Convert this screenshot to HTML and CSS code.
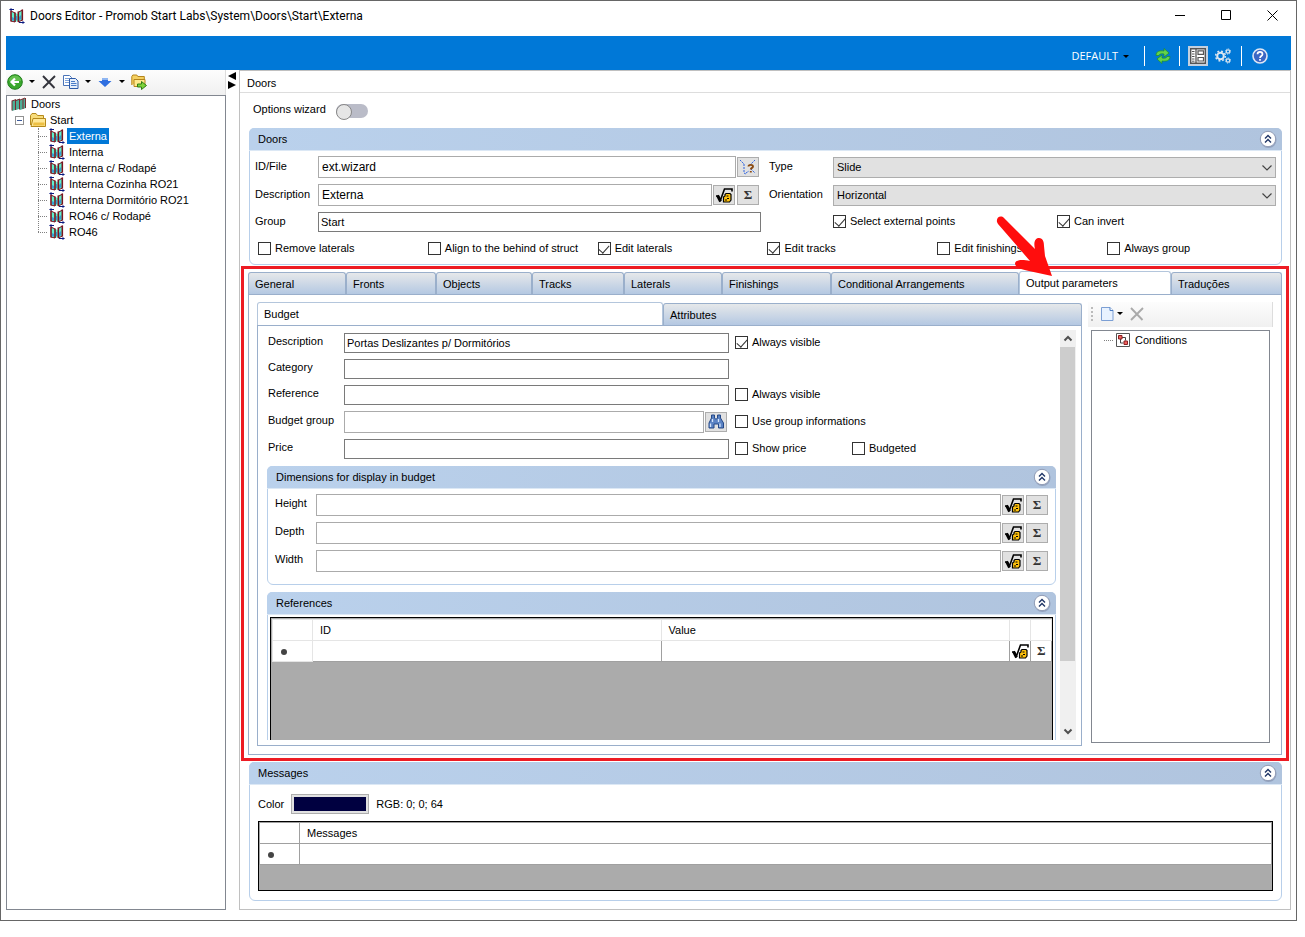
FILE: index.html
```
<!DOCTYPE html>
<html lang="en">
<head>
    <meta charset="UTF-8">
    <meta name="viewport" content="width=device-width, initial-scale=1.0">
    <title>Doors Editor</title>
    <link rel="stylesheet" href="styles.css">
</head>
<body>
    <!-- shared icons -->
    <svg class="sprite" aria-hidden="true">
        <symbol id="i-door" viewBox="0 0 16 16">
            <path d="M2 3l4 2v9l-4-1zM6 5l3 1v7l-3 1zM9 4l4-2v10l-4 2z" fill="#5ff0cc"/>
            <path d="M3 9l2 1v3l-2-1zM10 9l2-2v4l-2 2zM7 8h1v4H7z" fill="#35a0d8"/>
            <path d="M2 2.500v11M6 4.500v9.500M9.300 3.500v10.500M13.300 1.500v11" stroke="#7a1420" stroke-width="1.600" fill="none"/>
            <path d="M2 3l4 2M9 4.500l4.500-2.500M2 13l4 1M9 14l4.500-2" stroke="#7a1420" fill="none"/>
            <path d="M1 1.500h4M10 14.500h5" stroke="#0a1a80"/>
            <path d="M0 1.500l2.500-1.500v3zM16 14.500l-2.500-1.500v3z" fill="#0a1a80"/>
        </symbol>
        <symbol id="i-doors" viewBox="0 0 16 16">
            <path d="M1 5l3-1v10l-3 1zM5 4l3-1v10l-3 1zM9 4l3-1v10l-3 1zM12 3l3-1v10l-3 1z" fill="#4fae96"/>
            <path d="M1 4.500v10M4.500 4v10M8.500 3v10.500M12 3v10M14.500 2v10M1 5l4-1.500M5 4.500l4-1.500M9 4l5-2" stroke="#7a2a30" fill="none"/>
        </symbol>
        <symbol id="i-folder" viewBox="0 0 16 16">
            <path d="M.5 13V3.500l1.500-2h4l1.500 2h6v3" fill="#f7dc7a" stroke="#b58a1c"/>
            <path d="M1 14.500l2-8h12.500v8z" fill="#ffe998" stroke="#b58a1c"/>
            <path d="M3 13.500h11.500v-3h-11z" fill="#edc044"/>
        </symbol>
        <symbol id="i-back" viewBox="0 0 16 16">
            <circle cx="8" cy="8" r="7.300" fill="#3aa82c" stroke="#1d7d18"/>
            <path d="M2 7a6 5.500 0 0 1 12 0z" fill="#7fd066" opacity=".6"/>
            <path d="M12 8H5M8 4.500L4.500 8 8 11.500" stroke="#fff" stroke-width="2.200" fill="none"/>
        </symbol>
        <symbol id="i-x" viewBox="0 0 16 16">
            <path d="M2 2l11.500 12M14 2L2 14" stroke="currentColor" stroke-width="1.900" fill="none"/>
        </symbol>
        <symbol id="i-copy" viewBox="0 0 16 16">
            <path d="M.5 1.500h6l2 2v8h-8z" fill="#fff" stroke="#4a74b8"/>
            <path d="M2 4.500h4M2 6.500h5M2 8.500h5" stroke="#7fa3d8"/>
            <path d="M6.500 4.500h6l2.500 2.500v7.500H6.500z" fill="#e6effb" stroke="#2d5ba8"/>
            <path d="M8 7.500h4M8 9.500h5.500M8 11.500h5.500" stroke="#4a7cc8"/>
        </symbol>
        <symbol id="i-down" viewBox="0 0 16 16">
            <path d="M5 4h6v3h3.500L8 13 1.500 7H5z" fill="#2f6fe0"/>
            <path d="M5 4h6v2H5z" fill="#8fb6f2"/>
        </symbol>
        <symbol id="i-export" viewBox="0 0 16 16">
            <path d="M.8 11V2.500l1-1.500h4l1 1.500h6.500V5" fill="#f5d060" stroke="#b5851c"/>
            <path d="M3 12.500V5.500h11v7z" fill="#ffe98c" stroke="#b5851c"/>
            <path d="M6.500 10h4V7.500l5 4-5 4V13h-4z" fill="#7ed33a" stroke="#2f7d14"/>
        </symbol>
        <symbol id="i-refresh" viewBox="0 0 16 16">
            <path d="M1 7.500C1 3 5 2.500 9 3V.5l5 4.500-5 4V6C6 5.500 4.500 6 4 7.500z" fill="#63d34b" stroke="#1f8d25" stroke-width=".7"/>
            <path d="M15 8.500c0 4.500-4 5-8 4.500v2.500L2 11l5-4v3c3 .5 4.500 0 5-1.500z" fill="#63d34b" stroke="#1f8d25" stroke-width=".7"/>
        </symbol>
        <symbol id="i-layout" viewBox="0 0 16 16">
            <path d="M.7.700h14.600v14.600H.7z" fill="#fff" stroke="#555" stroke-width="1.400"/>
            <path d="M6 1v14" stroke="#555" stroke-width="1.300"/>
            <path d="M2 3.500h2.500M2 6h2.500M2 8.500h2.500M2 11h2.500M2 13.200h2.500" stroke="#555"/>
            <path d="M8 2.800h5.500v3.500H8zM8 9.500h5.500v3.500H8z" fill="none" stroke="#555" stroke-width="1.200"/>
        </symbol>
        <symbol id="i-gears" viewBox="0 0 16 16">
            <g fill="none" stroke="#dce6f0">
                <circle cx="5.500" cy="8" r="3.300" stroke-width="2"/>
                <circle cx="5.500" cy="8" r="4.900" stroke-width="1.500" stroke-dasharray="1.900 1.950"/>
                <circle cx="13" cy="3.500" r="1.700" stroke-width="1.200"/>
                <circle cx="13" cy="3.500" r="2.600" stroke-dasharray="1 1.040"/>
                <circle cx="13" cy="12.500" r="1.700" stroke-width="1.200"/>
                <circle cx="13" cy="12.500" r="2.600" stroke-dasharray="1 1.040"/>
            </g>
        </symbol>
        <symbol id="i-help" viewBox="0 0 16 16">
            <circle cx="8" cy="8" r="7" fill="#3c66c4" stroke="#dfe6f4" stroke-width="1.600"/>
            <path d="M5.500 6.200c0-3.200 5-3.200 5 0 0 1.800-2.500 1.800-2.500 3.800M8 11v1.800" stroke="#fff" stroke-width="1.700" fill="none"/>
        </symbol>
        <symbol id="i-formula" viewBox="0 0 18 16">
            <path d="M1 9h2.500l2 4L9.500 2H17v2.500" stroke="#000" stroke-width="1.600" fill="none"/>
            <path d="M2.500 8.500l3 6" stroke="#000" stroke-width="2.800"/>
            <path d="M8.500 10L10 9V7.500l1-1h4l1 1v5.500l-1.500 2h-6z" fill="#ffc20e" stroke="#000" stroke-width="1.200"/>
            <path d="M11.500 9h2M12 11.500h2M10 13h2" stroke="#000"/>
        </symbol>
        <symbol id="i-points" viewBox="0 0 16 16">
            <path d="M0 1l4 4M4 5v9l2 1M6 14l3-2M15 1l-5 5M11 10l4 4" stroke="#2e62e0" stroke-dasharray="2 1" fill="none"/>
            <path d="M8.500 7.500c0-2.200 4.500-2.200 4.500 0 0 1.500-2.200 1.200-2.200 3M10.800 12v1.600" stroke="#8a4a12" stroke-width="1.900" fill="none"/>
        </symbol>
        <symbol id="i-binoculars" viewBox="0 0 16 16">
            <path d="M3.500 1h3v3l1 1h1l1-1V1h3v3l3 5v5h-5v-4H6v4H1V9l2.500-5z" fill="#5b83c4" stroke="#244888"/>
            <path d="M2.500 9.500v3.500M4.500 5v3M12 9.500v3.500M10.500 5v3" stroke="#d5e4fa" stroke-width="1.300"/>
        </symbol>
        <symbol id="i-file" viewBox="0 0 16 16">
            <path d="M2.500 1.500h8.500l3 3v10h-11.500z" fill="#e8f2ff" stroke="#7c9fd4"/>
            <path d="M11 1.500v3h3" fill="#fff" stroke="#4d7ec4"/>
        </symbol>
        <symbol id="i-condition" viewBox="0 0 16 16">
            <path d="M1.500 1.500h13v13h-13z" fill="#fff" stroke="#555"/>
            <path d="M5.500 7v4h3M7 5.500h3.500v3" stroke="#444" fill="none"/>
            <path d="M3.500 3.500h3.500v3.500H3.500zM9 9h3.500v3.500H9z" fill="#f06060" stroke="#8a2020"/>
        </symbol>
        <symbol id="i-collapse" viewBox="0 0 18 18">
            <circle cx="9.500" cy="10" r="8" fill="#7f8cab" opacity=".6"/>
            <circle cx="9" cy="9" r="7.700" fill="#fff" stroke="#8f9bb5"/>
            <path d="M6 8.500l3-3 3 3M6 12.500l3-3 3 3" stroke="#1f3566" stroke-width="1.400" fill="none"/>
        </symbol>
        <symbol id="i-chevron" viewBox="0 0 12 8">
            <path d="M1.500 1.500L6 6l4.500-4.500" stroke="#444" stroke-width="1.200" fill="none"/>
        </symbol>
        <symbol id="i-scroll" viewBox="0 0 10 10">
            <path d="M1.500 3L5 6.500 8.500 3" stroke="#505050" stroke-width="2" fill="none"/>
        </symbol>
    </svg>

    <div class="window">
        <header class="titlebar">
            <svg class="icon"><use href="#i-door"/></svg>
            <h1>Doors Editor - Promob Start Labs\System\Doors\Start\Externa</h1>
            <div class="window-buttons">
                <button type="button" aria-label="Minimize"><svg width="11" height="11"><path d="M0 5.500h10" stroke="#000"/></svg></button>
                <button type="button" aria-label="Maximize"><svg width="11" height="11"><path d="M.5.500h9v9h-9z" stroke="#000" fill="none"/></svg></button>
                <button type="button" aria-label="Close"><svg width="11" height="11"><path d="M.5.500l10 10M10.500.500l-10 10" stroke="#000"/></svg></button>
            </div>
        </header>

        <nav class="ribbon">
            <button type="button" class="profile">DEFAULT <span class="caret"></span></button>
            <span class="divider"></span>
            <button type="button" class="refresh" aria-label="Refresh"><svg class="icon"><use href="#i-refresh"/></svg></button>
            <span class="divider"></span>
            <button type="button" class="active" aria-label="Layout"><svg class="icon"><use href="#i-layout"/></svg></button>
            <button type="button" aria-label="Settings"><svg class="icon"><use href="#i-gears"/></svg></button>
            <span class="divider"></span>
            <button type="button" aria-label="Help"><svg class="icon"><use href="#i-help"/></svg></button>
        </nav>

        <div class="workspace">
            <aside class="sidebar">
                <div class="toolbar">
                    <button type="button" aria-label="New"><svg class="icon"><use href="#i-back"/></svg><span class="caret"></span></button>
                    <button type="button" class="dark" aria-label="Delete"><svg class="icon"><use href="#i-x"/></svg></button>
                    <button type="button" aria-label="Copy"><svg class="icon"><use href="#i-copy"/></svg><span class="caret"></span></button>
                    <button type="button" aria-label="Move down"><svg class="icon"><use href="#i-down"/></svg><span class="caret"></span></button>
                    <button type="button" aria-label="Export"><svg class="icon"><use href="#i-export"/></svg></button>
                </div>
                <div class="tree">
                    <div class="node root"><svg class="icon"><use href="#i-doors"/></svg><span>Doors</span></div>
                    <div class="node branch"><span class="expander"></span><svg class="icon"><use href="#i-folder"/></svg><span>Start</span></div>
                    <ul>
                        <li class="node selected"><svg class="icon"><use href="#i-door"/></svg><span>Externa</span></li>
                        <li class="node"><svg class="icon"><use href="#i-door"/></svg><span>Interna</span></li>
                        <li class="node"><svg class="icon"><use href="#i-door"/></svg><span>Interna c/ Rodapé</span></li>
                        <li class="node"><svg class="icon"><use href="#i-door"/></svg><span>Interna Cozinha RO21</span></li>
                        <li class="node"><svg class="icon"><use href="#i-door"/></svg><span>Interna Dormitório RO21</span></li>
                        <li class="node"><svg class="icon"><use href="#i-door"/></svg><span>RO46 c/ Rodapé</span></li>
                        <li class="node"><svg class="icon"><use href="#i-door"/></svg><span>RO46</span></li>
                    </ul>
                </div>
            </aside>

            <div class="splitter">
                <svg width="10" height="18"><path d="M9 0v8L1 4zM1 9v8l8-4z"/></svg>
            </div>

            <main class="editor">
                <h2 class="editor-title">Doors</h2>
                <div class="editor-body">
                    <div class="wizard">
                        <label for="wizard">Options wizard</label>
                        <input type="checkbox" class="switch" id="wizard">
                    </div>

                    <section class="panel">
                        <div class="panel-head">
                            <h3>Doors</h3>
                            <button type="button" class="collapse" aria-label="Collapse"><svg><use href="#i-collapse"/></svg></button>
                        </div>
                        <div class="door-form">
                            <label for="file">ID/File</label>
                            <div class="field">
                                <input type="text" class="text tall" id="file" value="ext.wizard">
                                <button type="button" class="tool" aria-label="Pick"><svg class="icon"><use href="#i-points"/></svg></button>
                            </div>
                            <label for="type" class="second">Type</label>
                            <div class="select">
                                <select id="type"><option>Slide</option></select>
                                <svg><use href="#i-chevron"/></svg>
                            </div>
                            <label for="desc">Description</label>
                            <div class="field">
                                <input type="text" class="text tall" id="desc" value="Externa">
                                <button type="button" class="tool" aria-label="Formula"><svg class="formula"><use href="#i-formula"/></svg></button>
                                <button type="button" class="tool sigma">Σ</button>
                            </div>
                            <label for="orientation" class="second">Orientation</label>
                            <div class="select">
                                <select id="orientation"><option>Horizontal</option></select>
                                <svg><use href="#i-chevron"/></svg>
                            </div>
                            <label for="group">Group</label>
                            <input type="text" class="text" id="group" value="Start">
                            <div class="check-pair">
                                <label class="check"><input type="checkbox" checked>Select external points</label>
                                <label class="check"><input type="checkbox" checked>Can invert</label>
                            </div>
                        </div>
                        <div class="check-row">
                            <label class="check"><input type="checkbox">Remove laterals</label>
                            <label class="check"><input type="checkbox">Align to the behind of struct</label>
                            <label class="check"><input type="checkbox" checked>Edit laterals</label>
                            <label class="check"><input type="checkbox" checked>Edit tracks</label>
                            <label class="check"><input type="checkbox">Edit finishings</label>
                            <label class="check"><input type="checkbox">Always group</label>
                        </div>
                    </section>

                    <section class="tabs">
                        <div class="tab-strip main-strip">
                            <button type="button" class="tab">General</button>
                            <button type="button" class="tab">Fronts</button>
                            <button type="button" class="tab">Objects</button>
                            <button type="button" class="tab">Tracks</button>
                            <button type="button" class="tab">Laterals</button>
                            <button type="button" class="tab">Finishings</button>
                            <button type="button" class="tab">Conditional Arrangements</button>
                            <button type="button" class="tab current">Output parameters
                                <svg class="pointer" viewBox="0 0 60 66">
                                    <path d="M1 7C0 2 5 0 8 3L39 34C37 26 40 23 43 23 47 23 48 27 48 31L49 41 56 61 33 56C26 54 20 53 19 49 19 45 25 44 34 46L2 9z" fill="#ff0d0d"/>
                                </svg>
                            </button>
                            <button type="button" class="tab">Traduções</button>
                        </div>
                        <div class="tab-page">
                            <div class="inner-tabs">
                                <div class="tab-strip inner-strip">
                                    <button type="button" class="tab current">Budget</button>
                                    <button type="button" class="tab">Attributes</button>
                                </div>
                                <div class="inner-page">
                                    <div class="pane">
                                        <div class="budget-form">
                                            <label for="b-desc">Description</label>
                                            <input type="text" class="text" id="b-desc" value="Portas Deslizantes p/ Dormitórios">
                                            <label class="check"><input type="checkbox" checked>Always visible</label>
                                            <label for="b-cat">Category</label>
                                            <input type="text" class="text" id="b-cat">
                                            <span></span>
                                            <label for="b-ref">Reference</label>
                                            <input type="text" class="text" id="b-ref">
                                            <label class="check"><input type="checkbox">Always visible</label>
                                            <label for="b-group">Budget group</label>
                                            <div class="field">
                                                <input type="text" class="text tall" id="b-group">
                                                <button type="button" class="tool" aria-label="Search"><svg class="icon"><use href="#i-binoculars"/></svg></button>
                                            </div>
                                            <label class="check"><input type="checkbox">Use group informations</label>
                                            <label for="b-price">Price</label>
                                            <input type="text" class="text" id="b-price">
                                            <div class="price-checks">
                                                <label class="check"><input type="checkbox">Show price</label>
                                                <label class="check"><input type="checkbox">Budgeted</label>
                                            </div>
                                        </div>

                                        <section class="panel">
                                            <div class="panel-head">
                                                <h3>Dimensions for display in budget</h3>
                                                <button type="button" class="collapse" aria-label="Collapse"><svg><use href="#i-collapse"/></svg></button>
                                            </div>
                                            <div class="size-form">
                                                <label for="height">Height</label>
                                                <div class="field">
                                                    <input type="text" class="text tall" id="height">
                                                    <button type="button" class="tool" aria-label="Formula"><svg class="formula"><use href="#i-formula"/></svg></button>
                                                    <button type="button" class="tool sigma">Σ</button>
                                                </div>
                                                <label for="depth">Depth</label>
                                                <div class="field">
                                                    <input type="text" class="text tall" id="depth">
                                                    <button type="button" class="tool" aria-label="Formula"><svg class="formula"><use href="#i-formula"/></svg></button>
                                                    <button type="button" class="tool sigma">Σ</button>
                                                </div>
                                                <label for="width">Width</label>
                                                <div class="field">
                                                    <input type="text" class="text tall" id="width">
                                                    <button type="button" class="tool" aria-label="Formula"><svg class="formula"><use href="#i-formula"/></svg></button>
                                                    <button type="button" class="tool sigma">Σ</button>
                                                </div>
                                            </div>
                                        </section>

                                        <section class="panel references">
                                            <div class="panel-head">
                                                <h3>References</h3>
                                                <button type="button" class="collapse" aria-label="Collapse"><svg><use href="#i-collapse"/></svg></button>
                                            </div>
                                            <div class="grid-box">
                                                <table class="light">
                                                    <thead>
                                                        <tr><th class="mark"></th><th>ID</th><th>Value</th><th class="slim"></th><th class="slim"></th></tr>
                                                    </thead>
                                                    <tbody>
                                                        <tr>
                                                            <td class="mark"><span class="new-row"></span></td>
                                                            <td></td>
                                                            <td></td>
                                                            <td class="slim"><svg class="formula"><use href="#i-formula"/></svg></td>
                                                            <td class="slim sigma">Σ</td>
                                                        </tr>
                                                    </tbody>
                                                </table>
                                            </div>
                                        </section>
                                    </div>
                                    <div class="scrollbar">
                                        <svg class="up"><use href="#i-scroll"/></svg>
                                        <div class="track"><div class="thumb"></div></div>
                                        <svg><use href="#i-scroll"/></svg>
                                    </div>
                                </div>
                            </div>

                            <div class="conditions">
                                <div class="toolbar">
                                    <span class="grip"></span>
                                    <button type="button" aria-label="New condition"><svg class="icon"><use href="#i-file"/></svg><span class="caret"></span></button>
                                    <button type="button" class="muted" aria-label="Delete condition"><svg class="icon"><use href="#i-x"/></svg></button>
                                </div>
                                <div class="tree">
                                    <div class="node"><svg class="icon"><use href="#i-condition"/></svg><span>Conditions</span></div>
                                </div>
                            </div>
                        </div>
                        <div class="highlight"></div>
                    </section>

                    <section class="panel messages">
                        <div class="panel-head">
                            <h3>Messages</h3>
                            <button type="button" class="collapse" aria-label="Collapse"><svg><use href="#i-collapse"/></svg></button>
                        </div>
                        <div class="color-row">
                            <label for="color">Color</label>
                            <button type="button" class="swatch" id="color" aria-label="Color"></button>
                            <span>RGB: 0; 0; 64</span>
                        </div>
                        <div class="grid-box">
                            <table>
                                <thead>
                                    <tr><th class="mark"></th><th>Messages</th></tr>
                                </thead>
                                <tbody>
                                    <tr><td class="mark"><span class="new-row"></span></td><td></td></tr>
                                </tbody>
                            </table>
                        </div>
                    </section>
                </div>
            </main>
        </div>
    </div>
</body>
</html>
```

FILE: styles.css
```
* {
    box-sizing: border-box;
}
body {
    margin: 0;
    padding: 0 8px 16px 0;
    min-height: 100vh;
    display: flex;
    background-color: #fff;
    color: #000;
    font-family: "Liberation Sans", Arial, sans-serif;
    font-size: 11px;
    line-height: 14px;
}
h1, h2, h3 {
    margin: 0;
    font-size: 11px;
    font-weight: normal;
}
button, input, select {
    font: inherit;
    color: inherit;
    margin: 0;
}
button {
    padding: 0;
    border: none;
    background: none;
}
svg {
    display: block;
    flex: none;
}
.sprite {
    position: absolute;
    width: 0;
    height: 0;
}
.icon {
    width: 16px;
    height: 16px;
}
.formula {
    width: 18px;
    height: 16px;
}
.caret {
    border: 3px solid transparent;
    border-top-color: #000;
    border-bottom: none;
}

/* window frame */
.window {
    flex: 1;
    display: flex;
    flex-direction: column;
    border: 1px solid #666;
    padding: 0 5px 10px;
}
.titlebar {
    height: 35px;
    padding: 0 13px 6px 3px;
    display: flex;
    align-items: center;
    gap: 5px;
}
.titlebar h1 {
    flex: 1;
    font-family: Roboto, "Open Sans", sans-serif;
    font-size: 12px;
}
.window-buttons {
    display: flex;
    gap: 35px;
}
.ribbon {
    height: 34px;
    padding: 6px 21px 0 0;
    display: flex;
    align-items: center;
    justify-content: flex-end;
    background-color: #0078d7;
    color: #fff;
}
.ribbon button {
    width: 20px;
    height: 20px;
    display: flex;
    align-items: center;
    justify-content: center;
}
.ribbon .active {
    background-color: #c3d0de;
    margin-right: 5px;
}
.ribbon .refresh {
    margin-right: -2px;
}
.ribbon .profile {
    width: auto;
    gap: 5px;
    font-family: "Open Sans", "Noto Sans", sans-serif;
}
.divider {
    width: 1px;
    height: 20px;
    margin: 0 8px;
    background-color: #fff;
}
.profile + .divider {
    margin-left: 15px;
}
.workspace {
    flex: 1;
    display: flex;
}

/* left side */
.sidebar {
    width: 220px;
    display: flex;
    flex-direction: column;
}
.toolbar {
    height: 25px;
    padding: 0 0 2px 1px;
    display: flex;
    align-items: center;
    gap: 6px;
    background: linear-gradient(#fdfdfd, #f0f0f0);
    border-right: 1px solid #ddd;
}
.toolbar button {
    display: flex;
    align-items: center;
    gap: 6px;
}
.toolbar .dark {
    color: #33343c;
}
.toolbar .muted {
    color: #aaa;
}
.tree {
    flex: 1;
    border: 1px solid #828790;
}
.tree ul {
    list-style: none;
    margin: 0 0 0 31px;
    padding: 0;
    position: relative;
}
.tree ul::before {
    content: "";
    position: absolute;
    top: 0;
    bottom: 8px;
    left: 0;
    border-left: 1px dotted #808080;
}
.node {
    height: 16px;
    display: flex;
    align-items: center;
    gap: 2px;
}
.node span:last-child {
    padding: 1px 2px;
}
.root {
    padding-left: 4px;
}
.branch {
    padding-left: 8px;
}
.expander {
    width: 9px;
    height: 9px;
    margin-right: 4px;
    border: 1px solid #919191;
    background: linear-gradient(#3c5a9a, #3c5a9a) center / 5px 1px no-repeat;
}
.tree li::before, .conditions .node::before {
    content: "";
    width: 9px;
    border-top: 1px dotted #808080;
}
.selected span:last-child {
    background-color: #0078d7;
    color: #fff;
}
.splitter {
    width: 13px;
    padding: 2px 0 0 1px;
}

/* editor */
.editor {
    flex: 1;
    display: flex;
    flex-direction: column;
    border: 1px solid #c0c0c0;
}
.editor-title {
    height: 22px;
    padding: 5px 7px 0;
    border-bottom: 1px solid #ddd;
}
.editor-body {
    padding: 0 8px 0 9px;
}
.wizard {
    height: 35px;
    padding-left: 4px;
    display: flex;
    align-items: center;
    gap: 10px;
}
.wizard label {
    padding-bottom: 4px;
}
.switch {
    appearance: none;
    width: 32px;
    height: 14px;
    border-radius: 7px;
    background-color: #babcc8;
    display: flex;
}
.switch::before {
    content: "";
    width: 14px;
    height: 14px;
    border: 1px solid #888;
    border-radius: 50%;
    background-color: #e6e6e6;
}
.panel {
    border: 1px solid #b8cfea;
    border-radius: 6px;
}
.panel-head {
    height: 23px;
    margin: -1px -1px 0;
    padding: 0 5px 0 9px;
    display: flex;
    align-items: center;
    justify-content: space-between;
    border-bottom: 1px solid #dce8f5;
    border-radius: 5px 5px 0 0;
    background: linear-gradient(90deg, #bad1ec, #b0c4de);
}
.collapse svg {
    width: 18px;
    height: 18px;
}
.door-form {
    padding: 5px 5px 0;
    display: grid;
    grid-template-columns: 63px 1fr 72px 1fr;
    row-gap: 6px;
    align-items: center;
}
.door-form > label {
    padding-bottom: 2px;
}
.door-form .second {
    padding-left: 8px;
}
.field {
    display: flex;
    align-items: center;
    gap: 2px;
    padding-right: 2px;
}
.text {
    width: 100%;
    min-width: 0;
    height: 20px;
    padding: 0 2px;
    border: 1px solid #7a7a7a;
    border-radius: 0;
    background-color: #fff;
}
.tall {
    flex: 1;
    height: 22px;
    padding: 0 3px;
    border-color: #ababab;
    font-size: 12px;
    margin-right: -1px;
}
.tool {
    width: 22px;
    height: 20px;
    display: flex;
    align-items: center;
    justify-content: center;
    border: 1px solid #adadad;
    background-color: #e1e1e1;
}
.sigma {
    font-family: "Liberation Serif", serif;
    font-size: 13px;
    font-weight: bold;
    color: #333;
}
.select {
    position: relative;
}
.select select {
    appearance: none;
    display: block;
    width: 100%;
    height: 21px;
    padding: 0 3px;
    border: 1px solid #adadad;
    border-radius: 0;
    background-color: #e1e1e1;
}
.select svg {
    position: absolute;
    right: 3px;
    top: 7px;
    width: 12px;
    height: 8px;
    pointer-events: none;
}
.check {
    display: flex;
    align-items: center;
    gap: 4px;
    white-space: nowrap;
}
.check input {
    appearance: none;
    flex: none;
    width: 13px;
    height: 13px;
    border: 1px solid #333;
    background-color: #fff;
    display: flex;
    justify-content: center;
}
.check input:checked::before {
    content: "";
    width: 5px;
    height: 9px;
    border: solid #333;
    border-width: 0 1px 1px 0;
    transform: rotate(42deg);
}
.check-pair {
    grid-column: 4;
    padding-bottom: 2px;
    display: grid;
    grid-template-columns: 224px 1fr;
}
.check-row {
    padding: 9px 4px 9px 8px;
    display: grid;
    grid-template-columns: repeat(6, 1fr);
}

/* tabs */
.tabs {
    position: relative;
    margin: 6px 0 7px -1px;
}
.tab-strip {
    display: grid;
    height: 23px;
    align-items: end;
}
.main-strip {
    grid-template-columns: 98fr 90fr 96fr 92fr 98fr 109fr 188fr 152fr 111fr;
}
.inner-strip {
    grid-template-columns: 406fr 419fr;
}
.tab {
    position: relative;
    height: 22px;
    padding: 0 6px;
    text-align: left;
    border: 1px solid #9aafcb;
    border-bottom: none;
    border-radius: 3px 3px 0 0;
    background: linear-gradient(#e6e8ea, #b4c8e2);
    white-space: nowrap;
}
.tab.current {
    height: 23px;
    background: #fff;
    border-color: #b4c6dc;
}
.tab-page {
    padding: 7px 8px 8px;
    display: flex;
    gap: 6px;
    border: 1px solid #9aafcb;
}
.inner-tabs {
    flex: 1;
}
.inner-page {
    padding: 4px 5px 5px 9px;
    display: flex;
    gap: 4px;
    border: 1px solid #9aafcb;
}
.pane {
    flex: 1;
    height: 410px;
    overflow: hidden;
}
.pane .panel {
    margin-bottom: 7px;
}
.budget-form {
    padding: 3px 0 7px 1px;
    display: grid;
    grid-template-columns: 76px 385px 1fr;
    row-gap: 6px;
    align-items: center;
}
.budget-form > label, .size-form > label {
    padding-bottom: 4px;
}
.budget-form .check {
    padding: 0 0 2px 6px;
}
.price-checks {
    display: grid;
    grid-template-columns: 117px 1fr;
}
.size-form {
    padding: 5px 5px 12px 7px;
    display: grid;
    grid-template-columns: 41px 1fr;
    row-gap: 6px;
    align-items: center;
}
.scrollbar {
    width: 16px;
    display: flex;
    flex-direction: column;
    align-items: center;
    background-color: #f0f0f0;
}
.scrollbar svg {
    width: 10px;
    height: 17px;
}
.scrollbar .up {
    transform: rotate(180deg);
}
.track {
    flex: 1;
    width: 100%;
}
.thumb {
    height: 314px;
    width: 15px;
    background-color: #cdcdcd;
}
.conditions {
    width: 185px;
    display: flex;
    flex-direction: column;
    gap: 3px;
}
.conditions .toolbar {
    padding-left: 3px;
}
.conditions .toolbar button {
    gap: 2px;
}
.conditions .tree {
    margin: 0 3px 3px;
    padding: 1px 0 0 12px;
}
.grip {
    width: 2px;
    height: 14px;
    background: repeating-linear-gradient(#bbb 0 2px, transparent 2px 4px);
}
.highlight {
    position: absolute;
    inset: -5px -7px -6px;
    border: 3px solid #ed1c24;
    pointer-events: none;
}
.pointer {
    position: absolute;
    left: -24px;
    top: -57px;
    width: 60px;
    height: 66px;
    z-index: 1;
    pointer-events: none;
}

/* data grids */
.grid-box {
    border: 1px solid #000;
    background-color: #ababab;
}
.references .grid-box {
    margin: 2px;
    height: 160px;
    padding: 1px 0 0 1px;
}
table {
    width: 100%;
    table-layout: fixed;
    border-collapse: collapse;
    background-color: #fff;
}
th, td {
    height: 21px;
    padding: 0 7px;
    border: 1px solid #a0a0a0;
    text-align: left;
    font-weight: normal;
}
.light th, .light .mark {
    border-color: #e5e5e5;
}
.mark {
    width: 40px;
}
.slim {
    width: 21px;
    padding: 0 1px;
}
td.sigma {
    padding-left: 6px;
    font-weight: bold;
}
.new-row {
    display: block;
    width: 6px;
    height: 6px;
    margin: 2px 0 0 1px;
    border-radius: 50%;
    background-color: #444;
}
.color-row {
    padding: 9px 8px 7px;
    display: flex;
    align-items: center;
    gap: 7px;
}
.swatch {
    width: 78px;
    height: 20px;
    border: 1px solid #adadad;
    background-color: #000040;
    box-shadow: inset 0 0 0 2px #e1e1e1;
}
.messages .grid-box {
    height: 70px;
    margin: 0 8px 9px;
}
```
